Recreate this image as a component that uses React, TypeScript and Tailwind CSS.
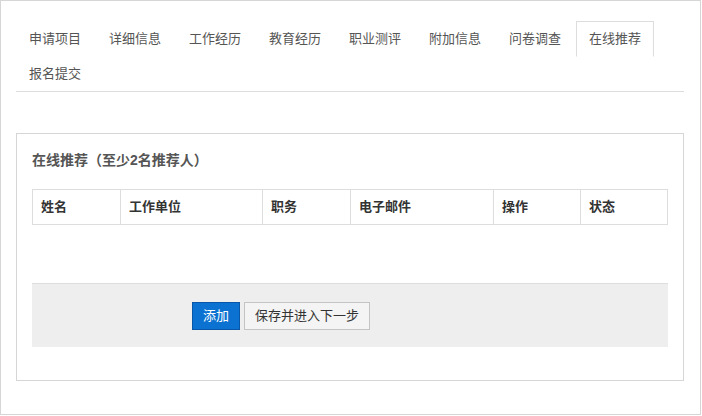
const TABS = [
  "申请项目",
  "详细信息",
  "工作经历",
  "教育经历",
  "职业测评",
  "附加信息",
  "问卷调查",
  "在线推荐",
  "报名提交",
];

const ACTIVE = "在线推荐";

const COLUMNS = [
  { label: "姓名", width: "w-[88px]" },
  { label: "工作单位", width: "w-[142px]" },
  { label: "职务", width: "w-[88px]" },
  { label: "电子邮件", width: "w-[143px]" },
  { label: "操作", width: "w-[87px]" },
  { label: "状态", width: "w-[87px]" },
];

export default function App() {
  return (
    <div
      className="w-[701px] h-[415px] border border-[#d6d6d6] bg-white text-[13px] text-[#555]"
      style={{ fontFamily: '"Liberation Sans", "Noto Sans CJK SC", sans-serif' }}
    >
      <div className="ml-[15px] mt-[20px] w-[668px]">
        <ul className="flex flex-wrap border-b border-[#ddd]">
          {TABS.map((t) => (
            <li key={t} className="mr-[2px] -mb-px">
              <a
                className={`block h-[36px] px-[12px] leading-[34px] border ${
                  t === ACTIVE
                    ? "border-[#ddd] border-b-white bg-white"
                    : "border-transparent"
                }`}
              >
                {t}
              </a>
            </li>
          ))}
        </ul>
      </div>

      <div className="ml-[15px] mt-[41px] w-[668px] border border-[#d6d6d6] px-[15px] pt-[16px] pb-[33px]">
        <h3 className="text-[14px] font-bold leading-[20px] text-[#555]">
          在线推荐（至少2名推荐人）
        </h3>

        <table className="mt-[19px] w-[635px] table-fixed border-collapse">
          <thead>
            <tr className="h-[35px]">
              {COLUMNS.map((c) => (
                <th
                  key={c.label}
                  className={`${c.width} border border-[#ddd] pl-[8px] text-left font-bold text-[#333]`}
                >
                  {c.label}
                </th>
              ))}
            </tr>
          </thead>
          <tbody />
        </table>

        <div className="mt-[58px] flex h-[64px] items-center gap-[4px] border-t border-[#ddd] bg-[#eee] pl-[160px]">
          <button
            type="button"
            className="h-[28px] w-[48px] border border-[#0756a8] bg-[#0b72d1] text-white"
          >
            添加
          </button>
          <button
            type="button"
            className="h-[28px] w-[126px] border border-[#c4c4c4] bg-[#f4f4f4] text-[#333]"
          >
            保存并进入下一步
          </button>
        </div>
      </div>
    </div>
  );
}
